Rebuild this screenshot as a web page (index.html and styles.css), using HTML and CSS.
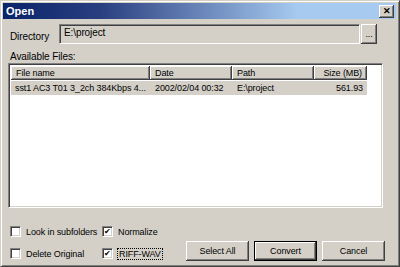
FILE: index.html
```html
<!DOCTYPE html>
<html lang="en">
<head>
  <meta charset="UTF-8" />
  <title>Open</title>
  <link rel="stylesheet" href="styles.css">
</head>
<body>
  <div class="window">
    <div class="titlebar">
      <span class="title">Open</span>
      <span class="close">&#x2715;</span>
    </div>

    <div class="dir-row">
      <label class="dir-label">Directory</label>
      <div class="textbox">E:\project</div>
      <button class="btn browse">...</button>
    </div>

    <div class="files-label">Available Files:</div>
    <div class="listbox">
      <div class="list-head">
        <div class="col c-name">File name</div>
        <div class="col c-date">Date</div>
        <div class="col c-path">Path</div>
        <div class="col c-size">Size (MB)</div>
      </div>
      <div class="list-row selected">
        <div class="cell c-name">sst1 AC3 T01 3_2ch 384Kbps 4...</div>
        <div class="cell c-date">2002/02/04 00:32</div>
        <div class="cell c-path">E:\project</div>
        <div class="cell c-size">561.93</div>
      </div>
    </div>

    <div class="bottom">
      <div class="checks">
        <label class="check"><span class="box"></span>Look in subfolders</label>
        <label class="check"><span class="box on">&#x2714;</span>Normalize</label>
        <label class="check"><span class="box"></span>Delete Original</label>
        <label class="check"><span class="box on">&#x2714;</span><span class="focus">RIFF-WAV</span></label>
      </div>
      <div class="buttons">
        <button class="btn">Select All</button>
        <button class="btn default">Convert</button>
        <button class="btn">Cancel</button>
      </div>
    </div>
  </div>
</body>
</html>
```

FILE: styles.css
```css
* {
  box-sizing: border-box;
}

body {
  margin: 0;
  padding: 0;
  background: #404040;
  font-family: 'Liberation Sans', Arial, sans-serif;
  font-size: 9px;
  letter-spacing: -0.1px;
  color: #000;
}

.window {
  width: 400px;
  height: 267px;
  background: #d4d0c8;
  border: 1px solid;
  border-color: #d4d0c8 #404040 #404040 #d4d0c8;
  box-shadow: inset 1px 1px 0 #fff, inset -1px -1px 0 #808080;
  padding: 2px 3px 3px 2px;
  display: flex;
  flex-direction: column;
}

.titlebar {
  height: 16px;
  background: linear-gradient(to right, #0a246a 0%, #2a3f80 25%, #a6caf0 75%);
  display: flex;
  align-items: center;
  justify-content: space-between;
  padding: 0 2px 0 3px;
}

.title {
  color: #fff;
  font-weight: bold;
  font-size: 11px;
  letter-spacing: 0;
}

.close {
  width: 15px;
  height: 13px;
  background: #d4d0c8;
  box-shadow: inset -1px -1px 0 #404040, inset 1px 1px 0 #fff, inset -2px -2px 0 #808080;
  font-size: 9px;
  font-weight: bold;
  line-height: 13px;
  text-align: center;
}

.dir-row {
  display: flex;
  align-items: center;
  margin-top: 5px;
  padding-left: 7px;
  height: 20px;
}

.dir-label {
  width: 49px;
  padding-top: 4px;
  font-size: 10px;
}

.textbox {
  width: 301px;
  height: 20px;
  border: 1px solid;
  border-color: #808080 #fff #fff #808080;
  box-shadow: inset 1px 1px 0 #404040, inset -1px -1px 0 #d4d0c8;
  padding: 2px 4px;
  font-size: 10px;
}

.btn {
  font-family: inherit;
  font-size: 9px;
  letter-spacing: -0.1px;
  background: #d4d0c8;
  border: none;
  box-shadow: inset -1px -1px 0 #404040, inset 1px 1px 0 #fff, inset -2px -2px 0 #808080;
  padding: 0;
  color: #000;
}

.browse {
  width: 16px;
  height: 20px;
  margin-left: 1px;
  line-height: 18px;
}

.files-label {
  margin: 7px 0 0 7px;
  height: 12px;
  font-size: 10px;
}

.listbox {
  margin: 0 13px 0 5px;
  height: 145px;
  background: #fff;
  border: 1px solid;
  border-color: #808080 #fff #fff #808080;
  box-shadow: inset 1px 1px 0 #404040, inset -1px -1px 0 #d4d0c8;
  padding: 2px;
}

.list-head {
  display: flex;
  height: 14px;
}

.col {
  background: #d4d0c8;
  box-shadow: inset -1px -1px 0 #404040, inset 1px 1px 0 #fff, inset -2px -2px 0 #808080;
  padding: 1px 5px 0;
  line-height: 13px;
  white-space: nowrap;
}

.c-name { width: 139px; }
.c-date { width: 82px; }
.c-path { width: 82px; }
.c-size { width: 53px; text-align: right; }

.list-row {
  display: flex;
  height: 14px;
  margin-top: 1px;
  width: 356px;
}

.list-row.selected {
  background: #d4d0c8;
}

.cell {
  padding: 1px 5px 0;
  line-height: 13px;
  white-space: nowrap;
  overflow: hidden;
}

.cell.c-name {
  padding-left: 4px;
}

.cell.c-size {
  padding-right: 4px;
}

.bottom {
  display: flex;
  margin-top: 14px;
  padding-left: 7px;
}

.checks {
  display: grid;
  grid-template-columns: 92px 80px;
  row-gap: 9px;
  margin-top: 4px;
}

.check {
  display: flex;
  align-items: center;
  height: 11px;
  white-space: nowrap;
}

.box {
  width: 11px;
  height: 11px;
  background: #fff;
  border: 1px solid;
  border-color: #808080 #fff #fff #808080;
  box-shadow: inset 1px 1px 0 #404040, inset -1px -1px 0 #d4d0c8;
  margin-right: 5px;
  font-size: 8px;
  line-height: 9px;
  text-align: center;
}

.focus {
  outline: 1px dotted #000;
  padding: 0 1px;
}

.buttons {
  display: flex;
  gap: 5px;
  margin-left: 4px;
  margin-top: 19px;
}

.buttons .btn {
  width: 63px;
  height: 20px;
}

.btn.default {
  border: 1px solid #000;
}
```
